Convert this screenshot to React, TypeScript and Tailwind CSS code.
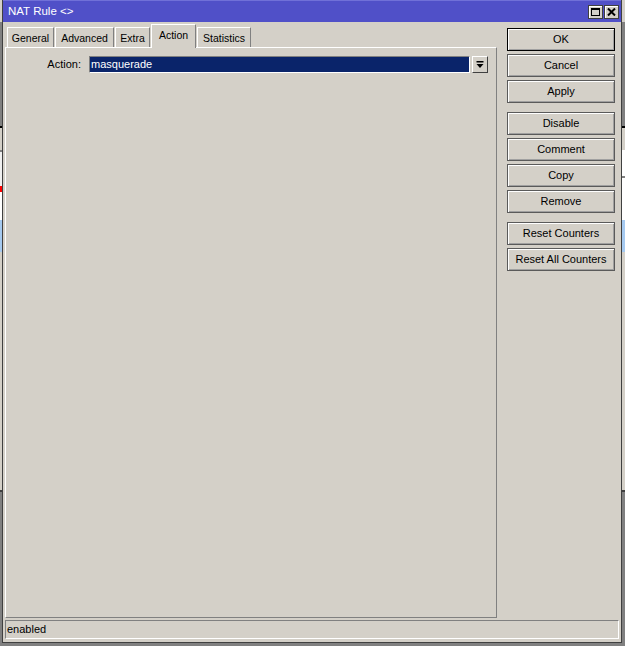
import React from 'react';

const font = { fontFamily: '"Liberation Sans", Arial, sans-serif' };

type Seg = [string, string];

const leftSegs: Seg[] = [
  ['h-[22px]', 'bg-[#d4d0c8]'],
  ['h-[104px]', 'bg-[#808080]'],
  ['h-[2px]', 'bg-[#000000]'],
  ['h-[22px]', 'bg-[#d4d0c8]'],
  ['h-[2px]', 'bg-[#808080]'],
  ['h-[34px]', 'bg-[#f0f0f0]'],
  ['h-[6px]', 'bg-[#ff0000]'],
  ['h-[28px]', 'bg-[#ffffff]'],
  ['h-[32px]', 'bg-[#a6caf0]'],
  ['h-[238px]', 'bg-[#d4d0c8]'],
  ['h-[2px]', 'bg-[#404040]'],
  ['flex-1', 'bg-[#808080]'],
];

const rightSegs: Seg[] = [
  ['h-[22px]', 'bg-[#d4d0c8]'],
  ['h-[104px]', 'bg-[#808080]'],
  ['h-[2px]', 'bg-[#000000]'],
  ['h-[22px]', 'bg-[#d4d0c8]'],
  ['h-[26px]', 'bg-[#ffffff]'],
  ['h-[2px]', 'bg-[#808080]'],
  ['h-[42px]', 'bg-[#ffffff]'],
  ['h-[32px]', 'bg-[#a6caf0]'],
  ['h-[238px]', 'bg-[#d4d0c8]'],
  ['h-[2px]', 'bg-[#404040]'],
  ['flex-1', 'bg-[#808080]'],
];

function Strip({ segs, width }: { segs: Seg[]; width: string }) {
  return (
    <div className={`${width} flex flex-col h-full`}>
      {segs.map(([h, c], i) => (
        <div key={i} className={`${h} ${c} shrink-0`} />
      ))}
    </div>
  );
}

const tabs: { label: string; w: string }[] = [
  { label: 'General', w: 'w-[47px]' },
  { label: 'Advanced', w: 'w-[59px]' },
  { label: 'Extra', w: 'w-[35px]' },
  { label: 'Action', w: 'w-[45px]' },
  { label: 'Statistics', w: 'w-[54px]' },
];

function Tab({ label, w, active }: { label: string; w: string; active?: boolean }) {
  if (active) {
    return (
      <div className={`${w} relative z-10 h-[24px] -mb-px pt-[3px] text-center text-[10.5px] bg-[#d4d0c8] border-t border-l border-white border-r border-r-[#808080] text-black`}>
        {label}
      </div>
    );
  }
  return (
    <div className={`${w} h-[20px] pt-[3px] text-center text-[10.5px] bg-[#d4d0c8] border-t border-l border-white border-r border-r-[#808080] text-black`}>
      {label}
    </div>
  );
}

function Btn({ label, def }: { label: string; def?: boolean }) {
  return (
    <div
      className={`h-[23px] w-[108px] flex items-center justify-center bg-[#d4d0c8] border ${
        def ? 'border-black' : 'border-[#5a5a5a]'
      } shadow-[inset_1px_1px_0_#ffffff,inset_-1px_-1px_0_#a0a0a0] text-black`}
    >
      {label}
    </div>
  );
}

export default function App() {
  return (
    <div className="w-[625px] h-[646px] flex flex-col bg-[#808080] text-[11px]" style={font}>
      <div className="h-[643px] flex shrink-0">
        <Strip segs={leftSegs} width="w-[2px]" />

        <div className="w-[620px] h-full flex flex-col bg-[#d4d0c8] border-l border-r border-b border-[#404040]">
          {/* title bar */}
          <div className="h-[22px] shrink-0 bg-[#5050c8] border-t border-[#7070d8] flex items-center pl-[5px] pr-[2px]">
            <span className="text-white text-[11.5px] flex-1">NAT Rule &lt;&gt;</span>
            <div className="flex gap-[1px]">
              <div className="w-[15px] h-[14px] bg-[#d4d0c8] border border-[#404040] shadow-[inset_1px_1px_0_#ffffff] flex items-center justify-center">
                <div className="w-[9px] h-[8px] border border-black border-t-2" />
              </div>
              <div className="w-[15px] h-[14px] bg-[#d4d0c8] border border-[#404040] shadow-[inset_1px_1px_0_#ffffff] flex items-center justify-center">
                <svg width="9" height="8" viewBox="0 0 9 8">
                  <path d="M1 0.5 L8 7.5 M8 0.5 L1 7.5" stroke="#000" strokeWidth="2" />
                </svg>
              </div>
            </div>
          </div>

          {/* main */}
          <div className="flex-1 flex pl-[2px] pt-[2px] min-h-0">
            <div className="w-[492px] flex flex-col">
              <div className="h-[23px] flex items-end gap-[1px] pl-[2px]">
                {tabs.map((t) => (
                  <Tab key={t.label} label={t.label} w={t.w} active={t.label === 'Action'} />
                ))}
              </div>
              <div className="flex-1 border-t border-l border-white border-r border-b border-r-[#808080] border-b-[#808080] pt-[8px]">
                <div className="flex items-center h-[17px]">
                  <div className="w-[83px] text-right pr-[8px] text-black">Action:</div>
                  <div className="w-[381px] h-[17px] bg-[#0a246a] border-t border-l border-[#808080] border-b border-r border-b-white border-r-white flex items-center pl-[1px] text-white">
                    masquerade
                  </div>
                  <div className="ml-[2px] w-[16px] h-[17px] bg-[#d4d0c8] border-t border-l border-white border-b border-r border-b-[#404040] border-r-[#404040] flex items-center justify-center">
                    <svg width="8" height="8" viewBox="0 0 8 8">
                      <rect x="0.5" y="0" width="7" height="1.5" fill="#000" />
                      <path d="M0.5 3 L7.5 3 L4 7 Z" fill="#000" />
                    </svg>
                  </div>
                </div>
              </div>
            </div>

            <div className="ml-[10px] pt-[4px] flex flex-col gap-[3px]">
              <Btn label="OK" def />
              <Btn label="Cancel" />
              <Btn label="Apply" />
              <div className="h-[3px]" />
              <Btn label="Disable" />
              <Btn label="Comment" />
              <Btn label="Copy" />
              <Btn label="Remove" />
              <div className="h-[3px]" />
              <Btn label="Reset Counters" />
              <Btn label="Reset All Counters" />
            </div>
          </div>

          {/* status bar */}
          <div className="h-[19px] shrink-0 mx-[2px] mt-[2px] mb-[3px] border-t border-l border-[#808080] border-b border-r border-b-white border-r-white flex items-center pl-[1px] text-black">
            enabled
          </div>
        </div>

        <Strip segs={rightSegs} width="w-[3px]" />
      </div>
      <div className="flex-1 bg-[#808080]" />
    </div>
  );
}
